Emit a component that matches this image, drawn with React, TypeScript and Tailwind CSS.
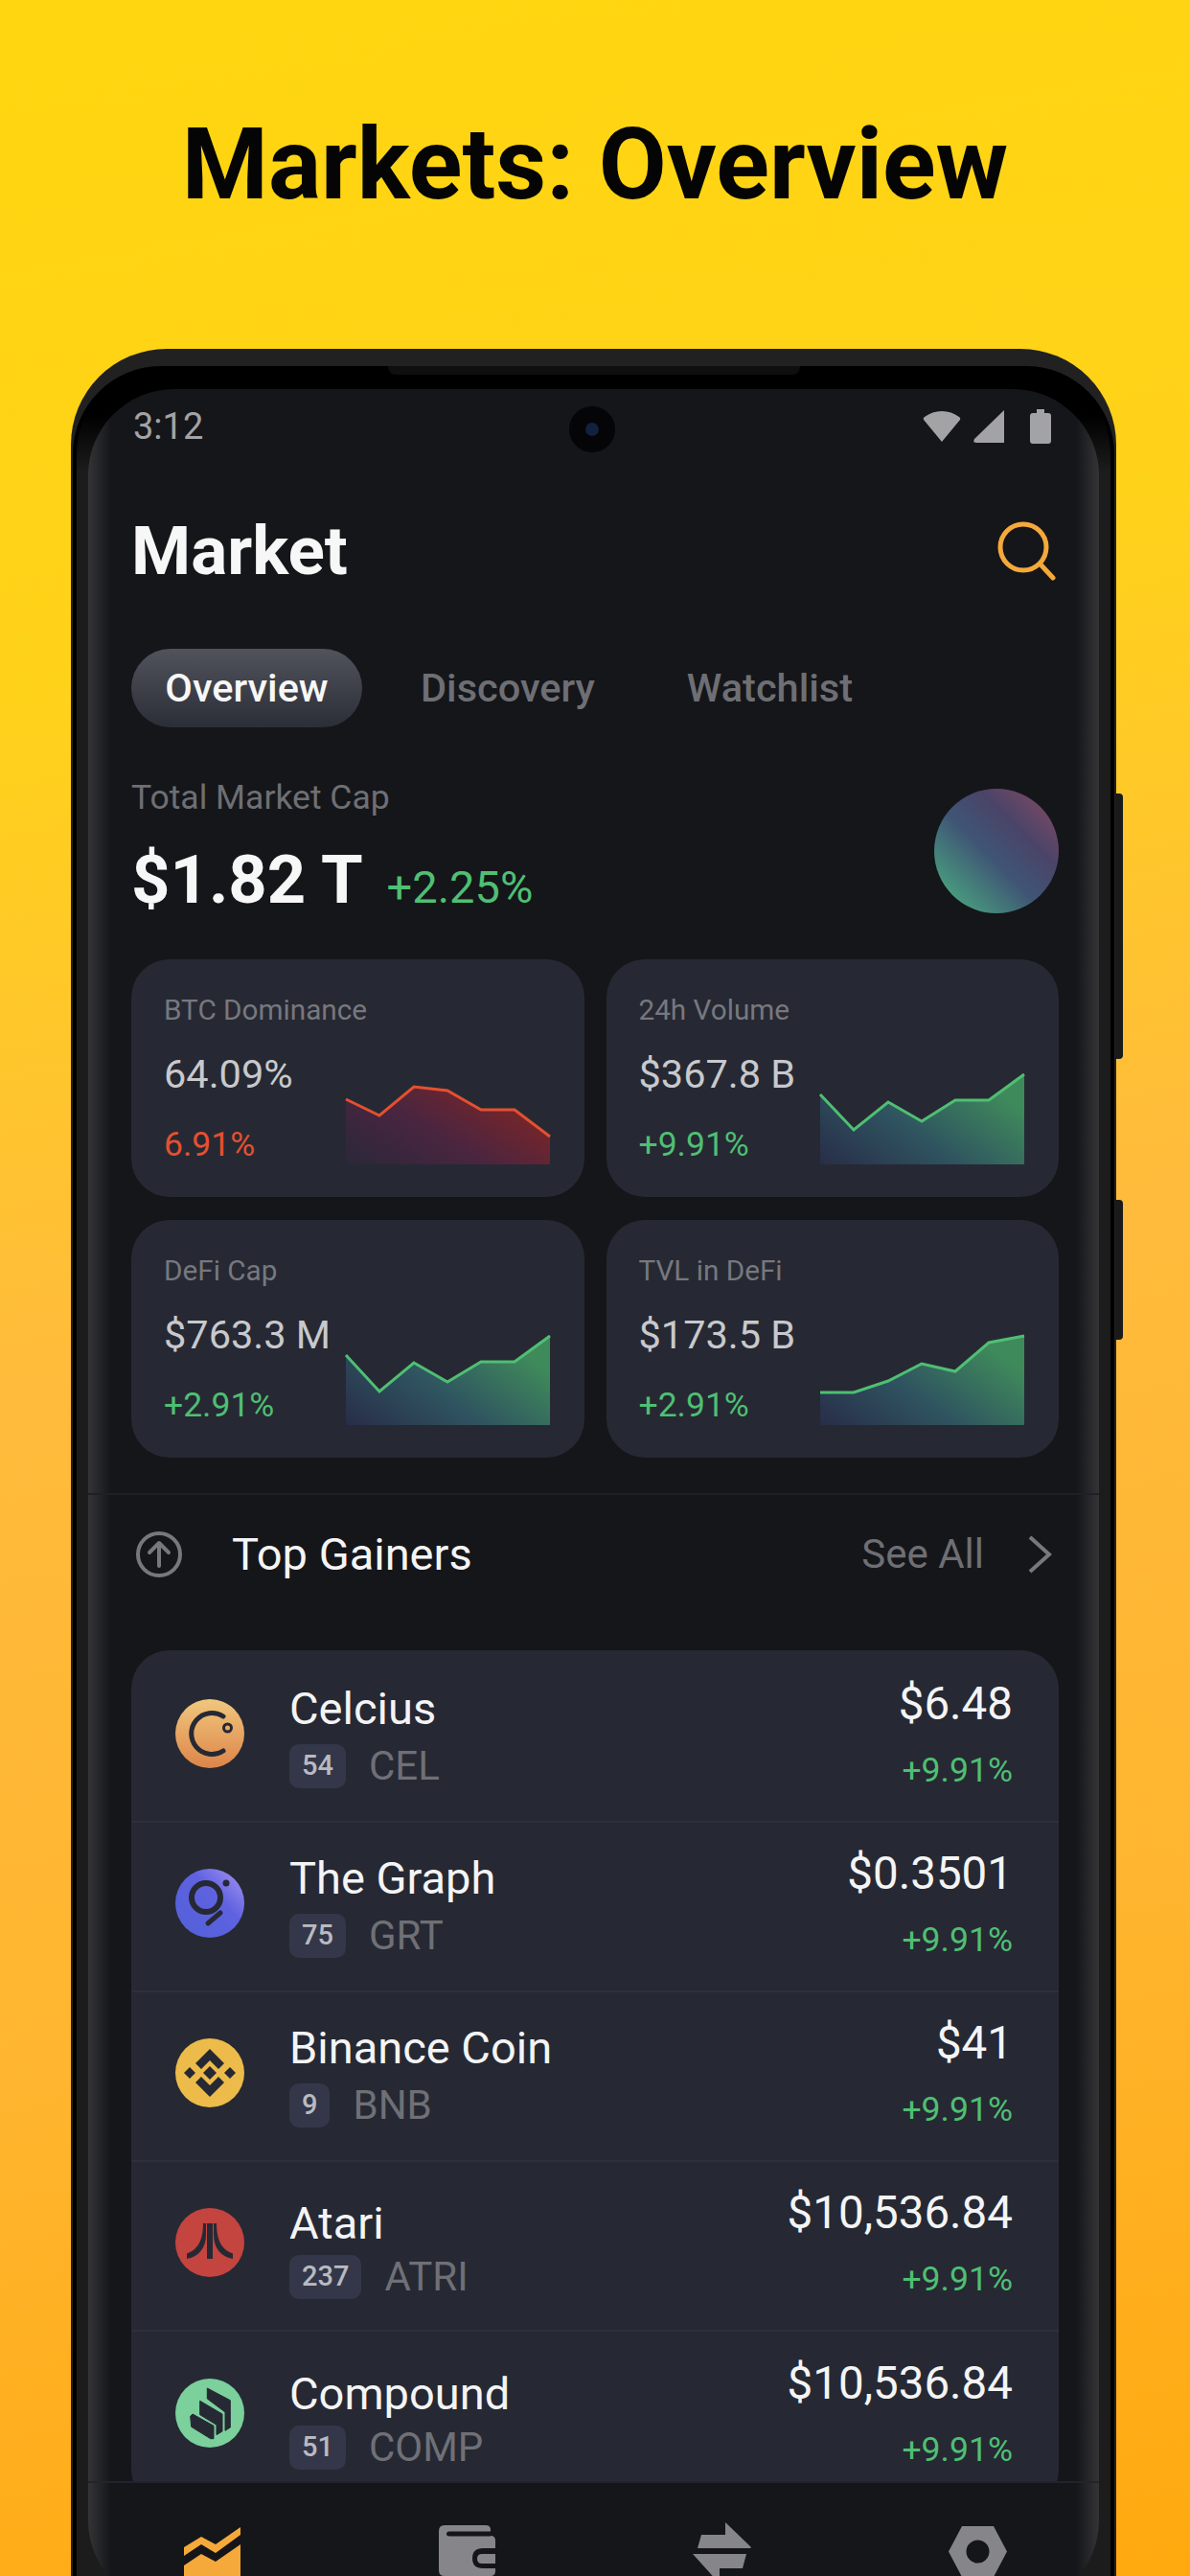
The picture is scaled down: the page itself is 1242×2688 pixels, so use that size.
const font = "font-['Roboto',sans-serif]";

const stats = [
  {
    label: "BTC Dominance",
    value: "64.09%",
    change: "6.91%",
    up: false,
    points: [26, 43, 13, 17, 37, 37, 65],
  },
  {
    label: "24h Volume",
    value: "$367.8 B",
    change: "+9.91%",
    up: true,
    points: [21, 58, 29, 49, 27, 27, 0],
  },
  {
    label: "DeFi Cap",
    value: "$763.3 M",
    change: "+2.91%",
    up: true,
    points: [21, 59, 29, 49, 28, 28, 1],
  },
  {
    label: "TVL in DeFi",
    value: "$173.5 B",
    change: "+2.91%",
    up: true,
    points: [60, 60, 48, 30, 38, 8, 1],
  },
];

const coins = [
  { name: "Celcius", rank: "54", ticker: "CEL", price: "$6.48", icon: "cel", top: "mt-[5px]", gap: "mt-[11px]" },
  { name: "The Graph", rank: "75", ticker: "GRT", price: "$0.3501", icon: "grt", top: "mt-[5px]", gap: "mt-[11px]" },
  { name: "Binance Coin", rank: "9", ticker: "BNB", price: "$41", icon: "bnb", top: "mt-[5px]", gap: "mt-[11px]" },
  { name: "Atari", rank: "237", ticker: "ATRI", price: "$10,536.84", icon: "atri", top: "mt-[12px]", gap: "mt-[7px]" },
  { name: "Compound", rank: "51", ticker: "COMP", price: "$10,536.84", icon: "comp", top: "mt-[12px]", gap: "mt-[7px]" },
];

function Sparkline({ points, up, id }: { points: number[]; up: boolean; id: string }) {
  const xs = [0, 35, 71, 106, 141, 176, 213];
  const line = points.map((y, i) => `${xs[i]},${y}`).join(" ");
  return (
    <svg width="213" height="94" viewBox="0 0 213 94" className="block overflow-visible">
      <defs>
        <linearGradient id={id} x1="0" x2="1" y1="1" y2="0.4">
          <stop offset="0" stopColor={up ? "#282d48" : "#2a2839"} />
          <stop offset="0.5" stopColor={up ? "#2f5460" : "#4a2540"} />
          <stop offset="1" stopColor={up ? "#3f8a5b" : "#7c2527"} />
        </linearGradient>
      </defs>
      <polygon points={`0,94 ${line} 213,94`} fill={`url(#${id})`} />
      <polyline points={line} fill="none" stroke={up ? "#4fbf73" : "#e4502f"} strokeWidth="3" />
    </svg>
  );
}

function StatCard({ stat, id }: { stat: (typeof stats)[number]; id: string }) {
  return (
    <div className="relative h-[248px] rounded-[40px] bg-[#262933] pl-[34px] pt-[36px]">
      <p className="text-[29.7px] leading-[34px] text-[#77787e]">{stat.label}</p>
      <p className="mt-[26px] text-[41.5px] leading-[48px] text-[#c8c9cd]">{stat.value}</p>
      <p
        className={`mt-[29px] text-[35.5px] leading-[40px] ${
          stat.up ? "text-[#4fbf73]" : "text-[#e4502f]"
        }`}
      >
        {stat.change}
      </p>
      <div className="absolute bottom-[34px] right-[36px]">
        <Sparkline points={stat.points} up={stat.up} id={id} />
      </div>
    </div>
  );
}

function CoinIcon({ kind }: { kind: string }) {
  if (kind === "cel") {
    return (
      <svg width="72" height="72" viewBox="0 0 72 72">
        <defs>
          <linearGradient id="cel" x1="0" x2="0" y1="0" y2="1">
            <stop offset="0" stopColor="#f0c77e" />
            <stop offset="1" stopColor="#dd8549" />
          </linearGradient>
        </defs>
        <circle cx="36" cy="36" r="36" fill="url(#cel)" />
        <path d="M50 18 A21.5 21.5 0 1 0 50 54" fill="none" stroke="#262933" strokeWidth="5" strokeLinecap="round" />
        <circle cx="54.5" cy="30" r="4" fill="none" stroke="#262933" strokeWidth="3" />
      </svg>
    );
  }
  if (kind === "grt") {
    return (
      <svg width="72" height="72" viewBox="0 0 72 72">
        <defs>
          <linearGradient id="grt" x1="0" x2="1" y1="1" y2="0">
            <stop offset="0" stopColor="#5160d8" />
            <stop offset="0.6" stopColor="#5f62e0" />
            <stop offset="1" stopColor="#a996f5" />
          </linearGradient>
        </defs>
        <circle cx="36" cy="36" r="36" fill="url(#grt)" />
        <circle cx="32" cy="30" r="15" fill="none" stroke="#262933" strokeWidth="6" />
        <circle cx="53" cy="15" r="3.5" fill="#262933" />
        <path d="M47 46 L34 57" stroke="#262933" strokeWidth="5" strokeLinecap="round" />
      </svg>
    );
  }
  if (kind === "bnb") {
    return (
      <svg width="72" height="72" viewBox="0 0 72 72">
        <circle cx="36" cy="36" r="36" fill="#ecbb4a" />
        <g fill="#262933">
          <path d="M36 11 L51 26 L45 32 L36 23 L27 32 L21 26 Z" />
          <path d="M36 61 L51 46 L45 40 L36 49 L27 40 L21 46 Z" />
          <path d="M36 29 L43 36 L36 43 L29 36 Z" />
          <path d="M15 30 L21 36 L15 42 L9 36 Z" />
          <path d="M57 30 L63 36 L57 42 L51 36 Z" />
        </g>
      </svg>
    );
  }
  if (kind === "atri") {
    return (
      <svg width="72" height="72" viewBox="0 0 72 72">
        <circle cx="36" cy="36" r="36" fill="#c4443f" />
        <g fill="#262933">
          <rect x="33" y="16" width="6" height="37" />
          <path d="M29 16 H32 V28 C32 42 24 51 12 53 V47.5 C22 44 29 36 29 16 Z" />
          <path d="M43 16 H40 V28 C40 42 48 51 60 53 V47.5 C50 44 43 36 43 16 Z" />
        </g>
      </svg>
    );
  }
  return (
    <svg width="72" height="72" viewBox="0 0 72 72">
      <circle cx="36" cy="36" r="36" fill="#7bd09c" />
      <g fill="#262933" stroke="#262933" strokeLinejoin="round">
        <path d="M15.7 39.3 L18 37 L40 49.3 V62.7 H36.7 L16.7 50.3 Z" />
        <path d="M25.7 23.3 L49 37 V55 L43 58.7 V48.3 L25.7 37.7 Z" />
        <path d="M33.3 10 L57.3 22.7 V51 L52 54.3 V35 L33.3 21 Z" />
      </g>
    </svg>
  );
}

function CoinRow({ coin, last }: { coin: (typeof coins)[number]; last: boolean }) {
  return (
    <div
      className={`flex h-[177px] items-center pb-[6px] pl-[46px] pr-[48px] ${
        last ? "" : "border-b-2 border-[#2d303b]"
      }`}
    >
      <CoinIcon kind={coin.icon} />
      <div className={`ml-[47px] flex-1 ${coin.top}`}>
        <p className="text-[47px] leading-[52px] text-[#f4f4f5]">{coin.name}</p>
        <div className={`flex items-center ${coin.gap}`}>
          <span className="flex h-[46px] items-center rounded-[10px] bg-[#343749] px-[13px] text-[29px] font-medium text-[#b9bac0]">
            {coin.rank}
          </span>
          <span className="ml-[24px] text-[42px] leading-[46px] text-[#6f7076]">{coin.ticker}</span>
        </div>
      </div>
      <div className="mt-[2px] text-right">
        <p className="text-[47.5px] leading-[52px] text-[#f4f4f5]">{coin.price}</p>
        <p className="mt-[22px] text-[35.6px] leading-[42px] text-[#4fbf73]">+9.91%</p>
      </div>
    </div>
  );
}

export default function App() {
  return (
    <div
      className={`relative h-[2688px] w-[1242px] overflow-hidden bg-[linear-gradient(170deg,#ffd60f_0%,#ffd21a_25%,#ffbb3c_50%,#ffb52f_75%,#ffa90e_100%)] ${font}`}
    >
      <h1 className="flex h-[364px] items-start justify-center pt-[112px] text-[103px] font-bold leading-[120px] text-[#050505]">
        Markets: Overview
      </h1>

      {/* side buttons */}
      <div className="absolute left-[1164px] top-[828px] h-[277px] w-[8px] rounded-r-[4px] bg-[#1a1a1b]" />
      <div className="absolute left-[1164px] top-[1252px] h-[146px] w-[8px] rounded-r-[4px] bg-[#1a1a1b]" />

      <div className="ml-[74px] h-[2500px] w-[1091px] rounded-[100px] bg-[#212122] pl-[2px] pr-[2px] pt-[18px]">
        <div className="relative h-[2480px] rounded-[92px] border-x-[4px] border-black bg-[linear-gradient(180deg,#000_0,#000_50px,#1c1c1d_110px)] pl-[12px] pr-[12px] pt-[24px]">
          {/* speaker slit */}
          <div className="absolute left-[325px] top-0 h-[9px] w-[430px] rounded-b-[8px] bg-[#0f0f10]" />

          <div className="relative flex h-[2314px] flex-col overflow-hidden rounded-[90px] bg-[linear-gradient(90deg,#343436_0,#15161a_24px,#15161a_calc(100%-24px),#343436_100%)] text-white">
            <div className="absolute left-[502px] top-[18px] flex h-[48px] w-[48px] items-center justify-center rounded-full bg-[#050507]">
              <div className="h-[14px] w-[14px] rounded-full bg-[#12213f]" />
            </div>

            {/* status bar */}
            <div className="flex h-[76px] shrink-0 items-center justify-between pl-[47px] pr-[50px] pt-[2px]">
              <span className="text-[38px] leading-[44px] text-[#a3a3a5]">3:12</span>
              <div className="flex items-center">
                <svg width="40" height="32" viewBox="0 0 40 32" fill="#a3a3a5">
                  <path d="M20 32 L1 9 Q0 7 2 6 Q10 0 20 0 Q30 0 38 6 Q40 7 39 9 Z" />
                </svg>
                <svg width="32" height="34" viewBox="0 0 32 34" fill="#a3a3a5" className="ml-[13px]">
                  <path d="M32 0 V34 H3 Q-1 34 1 30 Z" />
                </svg>
                <svg width="22" height="36" viewBox="0 0 22 36" fill="#a3a3a5" className="ml-[27px]">
                  <path d="M7 0 H15 V4 H19 Q22 4 22 7 V33 Q22 36 19 36 H3 Q0 36 0 33 V7 Q0 4 3 4 H7 Z" />
                </svg>
              </div>
            </div>

            <div className="flex shrink-0 flex-col pl-[45px] pr-[42px]">
              <div className="mt-[53px] flex h-[80px] items-center justify-between">
                <h2 className="text-[71px] font-bold leading-[80px] text-[#f7f7f7]">Market</h2>
                <svg width="62" height="62" viewBox="0 0 62 62" fill="none" stroke="#f5a93a" strokeWidth="5" className="mr-[2px]">
                  <circle cx="27" cy="27" r="24" />
                  <path d="M45 45 L58 59" strokeLinecap="round" />
                </svg>
              </div>

              <div className="mt-[62px] flex h-[82px] items-center text-[41.5px] font-medium text-[#6e6f74]">
                <span className="flex h-[82px] w-[241px] items-center justify-center rounded-[41px] bg-[linear-gradient(180deg,#50535c,#2c2e37)] text-[#f7f7f7]">
                  Overview
                </span>
                <span className="ml-[61px]">Discovery</span>
                <span className="ml-[96px]">Watchlist</span>
              </div>

              <div className="mt-[53px] flex items-center justify-between">
                <div>
                  <p className="text-[35.5px] leading-[40px] text-[#6e6f74]">Total Market Cap</p>
                  <p className="mt-[24px] flex items-baseline">
                    <span className="text-[70.5px] font-bold leading-[84px] text-[#f7f7f7]">$1.82 T</span>
                    <span className="ml-[25px] text-[47px] text-[#4fbf73]">+2.25%</span>
                  </p>
                </div>
                <div className="mt-[2px] h-[130px] w-[130px] rounded-full bg-[linear-gradient(45deg,#4aa77f_8%,#3f5575_45%,#4a4468_68%,#8d4a62_100%)]" />
              </div>

              <div className="mt-[39px] grid grid-cols-2 gap-x-[23px] gap-y-[24px]">
                {stats.map((stat, i) => (
                  <StatCard key={stat.label} stat={stat} id={`spark-${i}`} />
                ))}
              </div>
            </div>

            <div className="mt-[37px] shrink-0 border-t-2 border-[#1f2027] pl-[45px] pr-[42px]">
              <div className="flex h-[162px] items-center pb-[37px]">
                <svg width="48" height="48" viewBox="0 0 48 48" fill="none" stroke="#77787e" className="ml-[5px]">
                  <circle cx="24" cy="24" r="22" strokeWidth="4" />
                  <path d="M24 36 V13 M14 22 L24 12 L34 22" strokeWidth="4" strokeLinecap="round" strokeLinejoin="round" />
                </svg>
                <span className="ml-[52px] text-[47px] leading-[52px] text-[#f4f4f5]">Top Gainers</span>
                <span className="ml-auto text-[42px] leading-[52px] text-[#6e6f74]">See All</span>
                <svg width="26" height="42" viewBox="0 0 26 42" fill="none" stroke="#77787e" strokeWidth="4" className="ml-[45px] mr-[7px]">
                  <path d="M3 3 L23 21 L3 39" />
                </svg>
              </div>
            </div>

            {/* list is cut by the bottom bar */}
            <div className="h-[867px] shrink-0 overflow-hidden pl-[45px] pr-[42px]">
              <div className="h-[895px] rounded-[40px] bg-[#262933] pt-[3px]">
                {coins.map((coin, i) => (
                  <CoinRow key={coin.name} coin={coin} last={i === coins.length - 1} />
                ))}
              </div>
            </div>

            <div className="relative flex-1 border-t-2 border-[#22242c]">
              <div className="flex items-start pl-[100px] pt-[41px]">
                <svg width="59" height="70" viewBox="0 0 59 70" fill="#f5a93a" className="mt-[5px]">
                  <path d="M0 21 L18 10 L33 18 L59 0 V8 L33 27 L18 18 L0 30 Z" />
                  <path d="M0 40 L18 28 L33 36 L59 18 V70 H0 Z" />
                </svg>
                <svg width="59" height="53" viewBox="0 0 59 53" className="ml-[207px] mt-[3px]">
                  <path fill="#85858a" d="M6 0 H49 Q54 0 54 5 V11 H54 Q59 11 59 16 V48 Q59 53 54 53 H6 Q0 53 0 47 V6 Q0 0 6 0 Z" />
                  <path fill="#15161a" d="M11 6.5 H54 V11.5 H11 Q8 11.5 8 9 Q8 6.5 11 6.5 Z" />
                  <path fill="#15161a" d="M46 24 H59 V45 H46 Q35 45 35 34.5 Q35 24 46 24 Z" />
                  <path fill="#85858a" d="M45 30 H59 V40 H45 Q40 40 40 35 Q40 30 45 30 Z" />
                </svg>
                <svg width="61" height="70" viewBox="0 0 61 70" fill="#85858a" className="ml-[206px]">
                  <path d="M34 0 L61 26 Q61 27 59 27 H5 L9 13 H34 Z" />
                  <path d="M0 33 H56 L52 48 H28 V64 Z" />
                </svg>
                <svg width="61" height="53" viewBox="0 0 61 53" fill="#85858a" className="ml-[206px] mt-[4px]">
                  <path
                    fillRule="evenodd"
                    d="M14 0 H47 L61 26.5 L47 53 H14 L0 26.5 Z M30.5 14.5 A12 12 0 1 0 30.5 38.5 A12 12 0 1 0 30.5 14.5 Z"
                  />
                </svg>
              </div>
            </div>
          </div>
        </div>
      </div>
    </div>
  );
}
